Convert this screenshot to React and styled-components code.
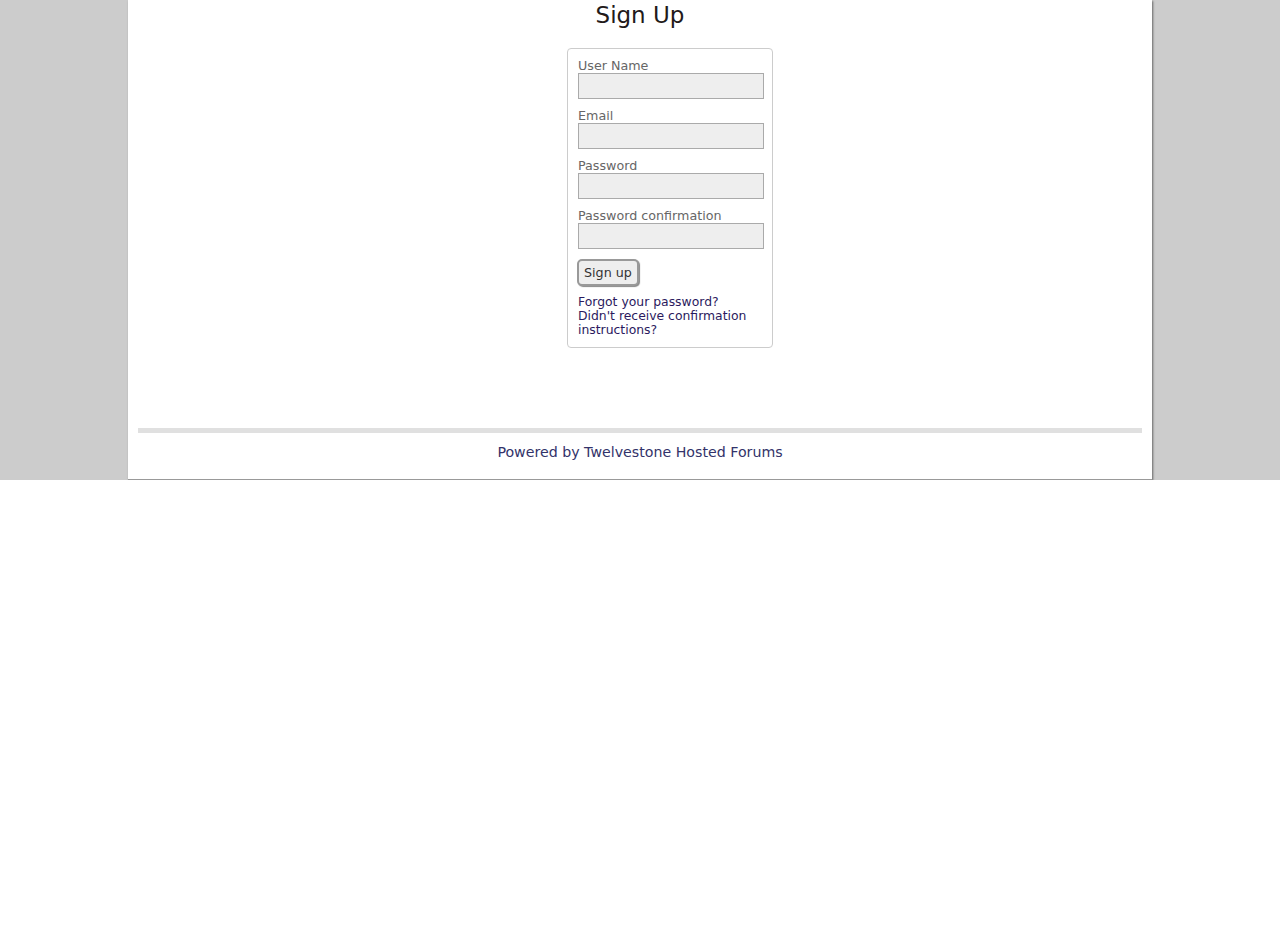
import React from 'react';
import styled, {createGlobalStyle} from 'styled-components';

const Global = createGlobalStyle`
    html {
        background: #fff;
    }
    body {
        margin: 0;
        background: #ccc;
        font-family: "DejaVu Sans", Verdana, sans-serif;
    }
`;

const Container = styled.div`
    width: 1004px;
    margin: 0 auto;
    padding: 0 10px;
    background: #fff;
    border-bottom: 1px solid #999;
    box-shadow: 1px 1px 2px #666;
    display: flex;
    flex-direction: column;
    align-items: center;
`;

const Title = styled.h2`
    margin: 0;
    font-size: 23px;
    font-weight: normal;
    line-height: 30px;
    color: #221a1a;
`;

const FormBox = styled.form`
    margin-top: 18px;
    width: 186px;
    padding: 10px 8px 10px 10px;
    border: 1px solid #ccc;
    border-radius: 4px;
    display: flex;
    flex-direction: column;
    margin-left: 60px;
`;

const Field = styled.div`
    display: flex;
    flex-direction: column;
    margin-bottom: 10px;
`;

const Label = styled.label`
    font-size: 12.7px;
    line-height: 14px;
    color: #666;
`;

const Input = styled.input`
    box-sizing: border-box;
    width: 186px;
    height: 26px;
    margin: 0;
    border: 1px solid #aaa;
    background: #eee;
`;

const Button = styled.button`
    align-self: flex-start;
    margin: 0 0 0 -1px;
    height: 27px;
    padding: 0 5px;
    font-family: inherit;
    font-size: 12.7px;
    color: #333;
    background: #eee;
    border: 2px solid #999;
    border-radius: 5px;
    box-shadow: 1px 1px 1px #888;
`;

const Links = styled.div`
    margin-top: 9px;
    display: flex;
    flex-direction: column;
`;

const Link = styled.a`
    font-size: 12.4px;
    line-height: 14px;
    color: #2b1a5e;
    text-decoration: none;
`;

const Footer = styled.div`
    margin-top: 80px;
    align-self: stretch;
    display: flex;
    flex-direction: column;
    align-items: center;
`;

const Rule = styled.div`
    align-self: stretch;
    height: 5px;
    background: #e0e0e0;
`;

const Powered = styled.a`
    margin: 11px 0 18px;
    font-size: 14.2px;
    line-height: 17px;
    color: #33336a;
    text-decoration: none;
`;

const fields = ['User Name', 'Email', 'Password', 'Password confirmation'];

const App = () => {
    return (
        <>
            <Global/>
            <Container>
                <Title>Sign Up</Title>
                <FormBox onSubmit={e => e.preventDefault()}>
                    {fields.map(f => (
                        <Field key={f}>
                            <Label>{f}</Label>
                            <Input type={f.startsWith('Password') ? 'password' : 'text'}/>
                        </Field>
                    ))}
                    <Button type="submit">Sign up</Button>
                    <Links>
                        <Link href="#">Forgot your password?</Link>
                        <Link href="#">Didn't receive confirmation instructions?</Link>
                    </Links>
                </FormBox>
                <Footer>
                    <Rule/>
                    <Powered href="#">Powered by Twelvestone Hosted Forums</Powered>
                </Footer>
            </Container>
        </>
    )
}

export default App;
